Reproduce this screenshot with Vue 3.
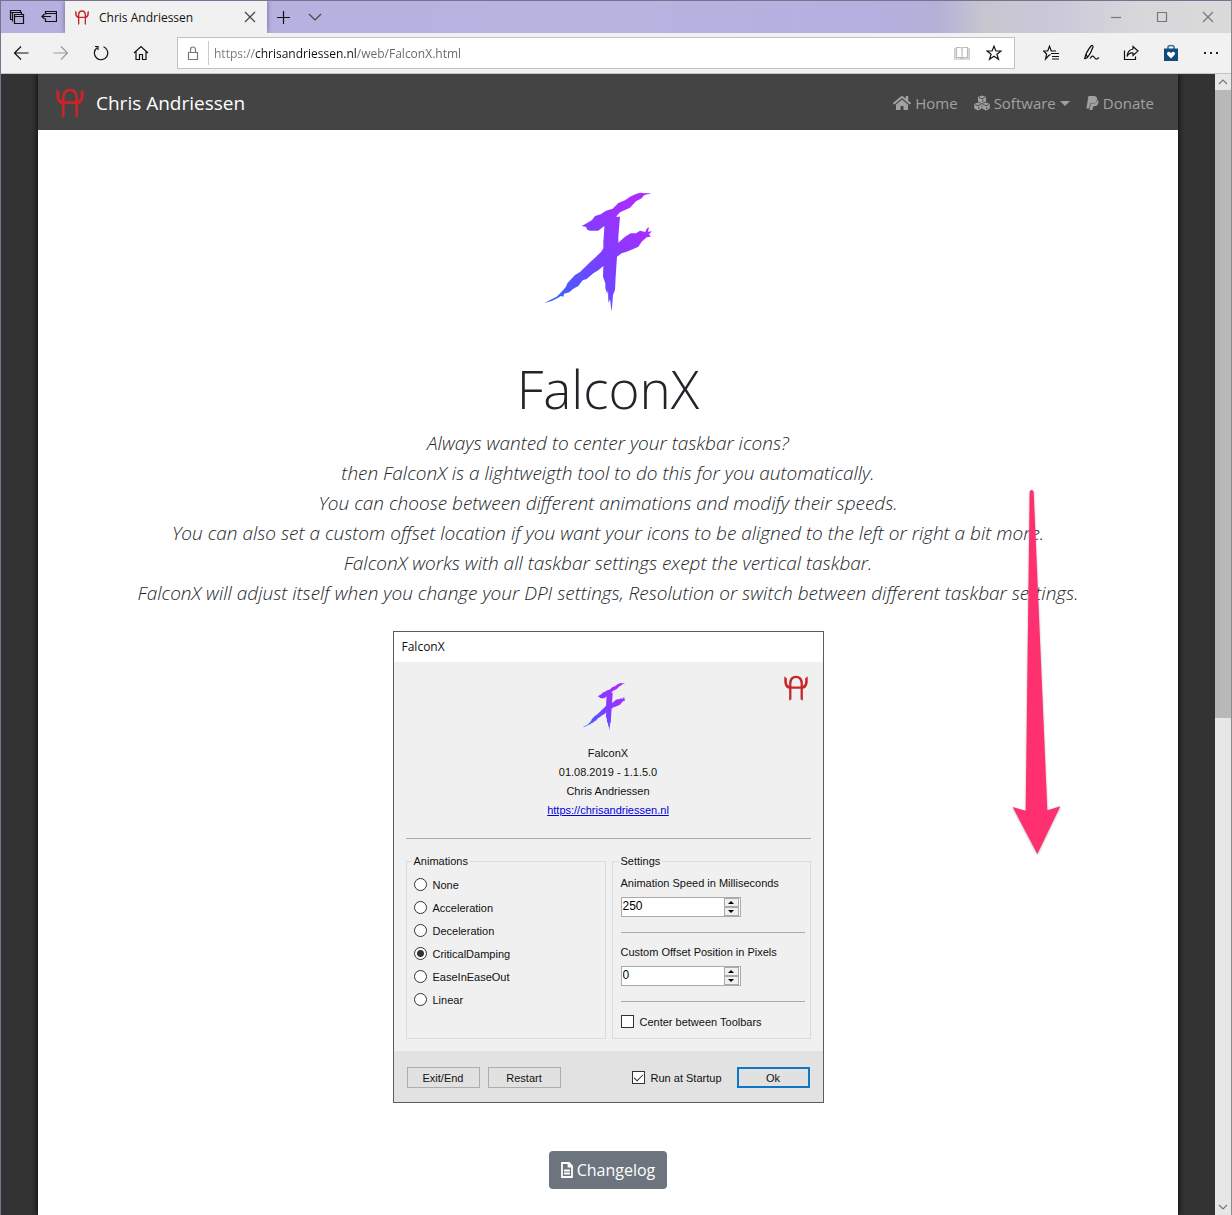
<script setup>
import { reactive, ref } from 'vue'

const brush =
  'M365 39L344 40L330 38L318 42L300 50L285 61L265 69L248 86L228 92L212 103L195 108L186 120L170 130L155 138L168 141L172 149L180 152L205 152L215 144L223 138L222 160L220 185L220 205L213 216L195 233L180 247L150 276L135 285L112 310L108 320L95 335L80 350L60 360L43 369L65 363L85 353L92 348L100 350L102 341L118 337L130 326L145 318L158 301L170 297L190 280L205 271L220 258L219 290L226 310L226 325L232 342L234 330L235 368L240 358L245 395L249 345L255 330L257 290L261 230L275 220L290 215L310 207L325 200L335 185L350 172L362 170L357 163L366 154L354 155L357 141L350 146L346 156L330 152L318 160L302 160L285 170L265 188L265 170L270 110L258 110L270 97L285 90L300 83L318 64L335 55L342 46Z'

const emblem =
  'M1 4L10 12V26Q12 38 25 40H59Q72 38 74 26V12L83 4V26Q80 46 66 48V90L58 84V48H26V84L18 90V48Q4 46 1 26ZM18 40V26Q20 2 42 2T66 26V40H58V28Q56 10 42 10T26 28V40Z'

const lead = [
  'Always wanted to center your taskbar icons?',
  'then FalconX is a lightweigth tool to do this for you automatically.',
  'You can choose between different animations and modify their speeds.',
  'You can also set a custom offset location if you want your icons to be aligned to the left or right a bit more.',
  'FalconX works with all taskbar settings exept the vertical taskbar.',
  'FalconX will adjust itself when you change your DPI settings, Resolution or switch between different taskbar settings.',
]

const animations = ['None', 'Acceleration', 'Deceleration', 'CriticalDamping', 'EaseInEaseOut', 'Linear']
const settings = reactive({
  animation: 'CriticalDamping',
  speed: '250',
  offset: '0',
  centered: false,
  startup: true,
})
const url = ref('https://chrisandriessen.nl/web/FalconX.html')

const step = (key, by) => {
  settings[key] = String(Number(settings[key]) + by)
}
</script>

<template>
  <div class="window">
    <header class="titlebar">
      <button class="tb" aria-label="Tabs set aside">
        <svg width="16" height="16" viewBox="0 0 16 16" class="line"><path d="M3.500 10.500h-2v-9h10v2M1.500 3.500h2M5.500 5.500h9v9h-9zM5.500 7.500h9M3.500 12.500v-9h9v2" /></svg>
      </button>
      <button class="tb" aria-label="Set tabs aside">
        <svg width="16" height="16" viewBox="0 0 16 16" class="line"><path d="M4.500 5.500v-3h11v10h-11v-3M4.500 4.500h11M1 7.500h9M3.500 5L1 7.500L3.500 10" /></svg>
      </button>
      <div class="tab">
        <svg class="ah" width="14" height="15" viewBox="0 0 84 90"><path :d="emblem" /></svg>
        <span class="tab-name">Chris Andriessen</span>
        <button class="tb" aria-label="Close tab">
          <svg width="12" height="12" viewBox="0 0 12 12" class="line soft"><path d="M1 1L11 11M11 1L1 11" /></svg>
        </button>
      </div>
      <button class="tb" aria-label="New tab">
        <svg width="14" height="14" viewBox="0 0 14 14" class="line"><path d="M7.500 1v13M1 7.500h13" /></svg>
      </button>
      <button class="tb" aria-label="Tab previews">
        <svg width="14" height="8" viewBox="0 0 14 8" class="line soft"><path d="M1 1L7 7L13 1" /></svg>
      </button>
      <div class="controls">
        <button class="tb" aria-label="Minimize"><svg width="12" height="12" viewBox="0 0 12 12" class="line grey"><path d="M1 6.500h10" /></svg></button>
        <button class="tb" aria-label="Maximize"><svg width="12" height="12" viewBox="0 0 12 12" class="line grey"><path d="M1.500 1.500h9v9h-9z" /></svg></button>
        <button class="tb" aria-label="Close"><svg width="12" height="12" viewBox="0 0 12 12" class="line grey"><path d="M1 1L11 11M11 1L1 11" /></svg></button>
      </div>
    </header>

    <div class="toolbar">
      <button class="tool" aria-label="Back"><svg width="16" height="16" viewBox="0 0 16 16" class="line"><path d="M8 1.500L1.500 8L8 14.500M1.500 8H15.500" /></svg></button>
      <button class="tool" aria-label="Forward"><svg width="16" height="16" viewBox="0 0 16 16" class="line pale"><path d="M8 1.500L14.500 8L8 14.500M14.500 8H.5" /></svg></button>
      <button class="tool" aria-label="Refresh"><svg width="16" height="16" viewBox="0 0 16 16" class="line"><path d="M10.500 1.800A6.700 6.700 0 1 1 4 2.700M2 1.500H5V5" /></svg></button>
      <button class="tool" aria-label="Home page"><svg width="16" height="16" viewBox="0 0 16 16" class="line"><path d="M1 8L8 1.500L15 8M3 6.500V14.500H6.500V9.500H9.500V14.500H13V6.500" /></svg></button>
      <div class="address">
        <svg width="12" height="14" viewBox="0 0 12 14" class="line grey"><path d="M1.500 6.500h9v7h-9zM3.500 6.500V4Q3.500 1 6 1T8.500 4V6.500" /></svg>
        <i class="bar"></i>
        <input v-model="url" class="url" type="text" aria-label="Address" />
        <button class="tb" aria-label="Reading view"><svg width="16" height="14" viewBox="0 0 16 14" class="line faint"><path d="M2.500 1.500H6.500Q8 1.500 8 3Q8 1.500 9.500 1.500H13.500V11.500H9.500L8 12.500L6.500 11.500H2.500zM8 3V12.500M2.500 3H.8V13H15.200V3H13.500" /></svg></button>
        <button class="tb" aria-label="Add to favorites"><svg width="16" height="16" viewBox="0 0 16 16" class="line"><path d="M8 1.200L9.900 6H15L10.900 9.200L12.500 14.300L8 11.200L3.500 14.300L5.100 9.200L1 6H6.100Z" /></svg></button>
      </div>
      <div class="tools">
        <button class="tool" aria-label="Favorites"><svg width="16" height="16" viewBox="1 0 16 16" class="line"><path d="M8.500 9.500L6.700 10.500L3.600 14L4.600 9L1.500 6H5.700L7.500 1.200L9.300 6H14M9 8.500H17M10 11.500H17M10 14H17" /></svg></button>
        <button class="tool" aria-label="Add notes"><svg width="18" height="18" viewBox="0 0 18 18" class="line"><path d="M2.500 15L4 10Q7 4 9.500 1.500Q11 1 11 3Q9 9 5.500 13.500L2.500 15M4 10L5.500 13.500M8 14.500Q10.500 10.500 12 13T15 15L17 13.500" /></svg></button>
        <button class="tool" aria-label="Share"><svg width="16" height="16" viewBox="0 0 16 16" class="line"><path d="M1.500 5.500V14.500H12.500V11.500M10 1.500L15 6L10 10.500V8Q6 7.500 4 11.500Q4.500 5 10 4Z" /></svg></button>
        <button class="tool" aria-label="Shopping"><svg width="16" height="18" viewBox="0 0 16 18"><path d="M5 5V3Q5 1.500 8 1.500T11 3V5" fill="none" stroke="#3e7298" stroke-width="1.500" /><path d="M1 4.500H15V17H1Z" fill="#0f4c78" /><path d="M8 14.500L4.300 10.800Q3.300 8.400 5.500 7.800Q7.200 7.500 8 9.300Q8.800 7.500 10.500 7.800Q12.700 8.400 11.700 10.800Z" fill="#fff" /></svg></button>
        <button class="tool" aria-label="More"><svg width="16" height="4" viewBox="0 0 16 4"><path d="M1 1h2v2H1zM7 1h2v2H7zM13 1h2v2h-2z" fill="#222" /></svg></button>
      </div>
    </div>

    <div class="view">
      <div class="backdrop">
        <div class="page">
          <nav class="navbar">
            <a class="brand" href="#">
              <svg class="ah" width="28" height="30" viewBox="0 0 84 90"><path :d="emblem" /></svg>
              Chris Andriessen
            </a>
            <a class="link" href="#">
              <svg width="18" height="16" viewBox="0 0 576 512" fill="currentColor"><path d="M280.370 148.260L96 300.110V464a16 16 0 0 0 16 16l112.060-.29a16 16 0 0 0 15.920-16V368a16 16 0 0 1 16-16h64a16 16 0 0 1 16 16v95.640a16 16 0 0 0 16 16.050L464 480a16 16 0 0 0 16-16V300L295.670 148.260a12.190 12.190 0 0 0-15.300 0zM571.600 251.470L488 182.560V44.050a12 12 0 0 0-12-12h-56a12 12 0 0 0-12 12v72.610L318.470 43a48 48 0 0 0-61 0L4.340 251.470a12 12 0 0 0-1.600 16.900l25.500 31A12 12 0 0 0 45.150 301l235.220-193.740a12.190 12.190 0 0 1 15.300 0L530.900 301a12 12 0 0 0 16.900-1.600l25.500-31a12 12 0 0 0-1.700-16.930z" /></svg>
              Home
            </a>
            <a class="link" href="#">
              <svg width="16" height="16" viewBox="0 0 32 32">
                <g fill="currentColor"><path d="M16 1L24 4V13L16 17L8 13V4Z" /><path d="M8 15L15.500 18V27L8 31L.5 27V18Z" /><path d="M24 15L31.500 18V27L24 31L16.500 27V18Z" /></g>
                <path d="M10 5L16 7.500L22 5M2.500 19L8 21.500L13.500 19M18.500 19L24 21.500L29.500 19M17.500 14V9.500M9.500 28V23.500M25.500 28V23.500" fill="none" stroke="#444" stroke-width="1.800" />
              </svg>
              Software<i class="caret"></i>
            </a>
            <a class="link" href="#">
              <svg width="13" height="16" viewBox="0 0 384 512" fill="currentColor"><path d="M111.400 295.900c-3.500 19.200-17.400 108.700-21.500 134-.3 1.800-1 2.500-3 2.500H12.300c-7.600 0-13.100-6.600-12.100-13.900L58.800 46.600c1.500-9.600 10.100-16.900 20-16.900 152.300 0 165.100-3.700 204 11.400 60.100 23.300 65.600 79.500 44 140.300-21.500 62.600-72.500 89.500-140.100 90.300-43.400.7-69.500-7-75.300 24.200zM357.100 152c-1.800-1.300-2.500-1.800-3 1.300-2 11.400-5.100 22.500-8.800 33.600-39.900 113.800-150.500 103.900-204.500 103.900-6.100 0-10.100 3.300-10.900 9.400-22.600 140.400-27.100 169.700-27.100 169.700-1 7.100 3.500 12.900 10.600 12.900h63.500c8.600 0 15.700-6.300 17.400-14.900.7-5.400-1.100 6.100 14.400-91.300 4.600-22 14.300-19.700 29.300-19.700 71 0 126.400-28.800 142.900-112.300 6.500-34.800 4.600-71.400-23.800-92.600z" /></svg>
              Donate
            </a>
          </nav>

          <main class="main">
            <svg width="156" height="140" viewBox="0 0 468 420">
              <defs>
                <linearGradient id="violet" gradientUnits="userSpaceOnUse" x1="60" y1="350" x2="350" y2="120">
                  <stop offset="0" stop-color="#3a62ff" />
                  <stop offset=".5" stop-color="#7a40ff" />
                  <stop offset="1" stop-color="#ac2cff" />
                </linearGradient>
              </defs>
              <path :d="brush" fill="url(#violet)" />
            </svg>
            <h1>FalconX</h1>
            <p class="lead">
              <template v-for="line in lead" :key="line">{{ line }}<br /></template>
            </p>

            <section class="dialog">
              <header class="dialog-title">FalconX</header>
              <div class="dialog-body">
                <div class="about">
                  <svg class="mini" width="64" height="56" viewBox="0 0 468 420"><path :d="brush" fill="url(#violet)" /></svg>
                  <svg class="ah corner" width="24" height="26" viewBox="0 0 84 90"><path :d="emblem" /></svg>
                  <span>FalconX</span>
                  <span>01.08.2019 - 1.1.5.0</span>
                  <span>Chris Andriessen</span>
                  <a href="#">https://chrisandriessen.nl</a>
                </div>
                <hr />
                <div class="groups">
                  <fieldset>
                    <legend>Animations</legend>
                    <label v-for="name in animations" :key="name" class="option">
                      <input v-model="settings.animation" type="radio" name="animation" :value="name" />{{ name }}
                    </label>
                  </fieldset>
                  <fieldset>
                    <legend>Settings</legend>
                    <label class="caption" for="speed">Animation Speed in Milliseconds</label>
                    <div class="spin">
                      <input id="speed" v-model="settings.speed" type="text" />
                      <span class="arrows">
                        <button aria-label="Increase speed" @click="step('speed', 1)"><svg width="6" height="3" viewBox="0 0 6 3"><path d="M0 3L3 0L6 3Z" /></svg></button>
                        <button aria-label="Decrease speed" @click="step('speed', -1)"><svg width="6" height="3" viewBox="0 0 6 3"><path d="M0 0L3 3L6 0Z" /></svg></button>
                      </span>
                    </div>
                    <hr />
                    <label class="caption" for="offset">Custom Offset Position in Pixels</label>
                    <div class="spin">
                      <input id="offset" v-model="settings.offset" type="text" />
                      <span class="arrows">
                        <button aria-label="Increase offset" @click="step('offset', 1)"><svg width="6" height="3" viewBox="0 0 6 3"><path d="M0 3L3 0L6 3Z" /></svg></button>
                        <button aria-label="Decrease offset" @click="step('offset', -1)"><svg width="6" height="3" viewBox="0 0 6 3"><path d="M0 0L3 3L6 0Z" /></svg></button>
                      </span>
                    </div>
                    <hr />
                    <label class="check"><input v-model="settings.centered" type="checkbox" />Center between Toolbars</label>
                  </fieldset>
                </div>
              </div>
              <footer class="dialog-foot">
                <button class="btn">Exit/End</button>
                <button class="btn">Restart</button>
                <label class="check run"><input v-model="settings.startup" type="checkbox" />Run at Startup</label>
                <button class="btn ok">Ok</button>
              </footer>
            </section>

            <button class="changelog">
              <svg width="12" height="16" viewBox="0 0 12 16" fill="none" stroke="#fff" stroke-width="1.800"><path d="M1 1H8L11 4V15H1ZM7.500 1V4.500H11M3 8.500H9M3 11.500H9" /></svg>
              Changelog
            </button>
          </main>

          <svg class="arrow" width="80" height="385" viewBox="0 0 240 1155">
            <path d="M89 36Q90 30 95 30T101 36L142 991L181 979L112 1122L38 981L77 992Z" fill="#ff306f" />
          </svg>
        </div>
      </div>
      <div class="scroll">
        <svg width="10" height="6" viewBox="0 0 10 6" class="line grey"><path d="M1 5L5 1L9 5" /></svg>
        <i class="thumb"></i>
        <i class="track"></i>
        <svg width="10" height="6" viewBox="0 0 10 6" class="line grey"><path d="M1 1L5 5L9 1" /></svg>
      </div>
    </div>
  </div>
</template>

<style>
body {
  margin: 0;
}
</style>

<style scoped>
* {
  box-sizing: border-box;
}
.window {
  display: flex;
  flex-direction: column;
  min-height: 100vh;
  border: 1px solid #77738f;
  border-right-color: #8a8a8e;
  border-bottom-color: #777;
  background: #f1f1f1;
  font-family: "Open Sans", "Noto Sans", sans-serif;
  color: #212529;
}
button {
  display: inline-flex;
  align-items: center;
  justify-content: center;
  padding: 0;
  border: 0;
  background: none;
  font: inherit;
  color: inherit;
}
svg {
  flex: none;
  display: block;
}
.line {
  fill: none;
  stroke: #111;
  stroke-width: 1.2;
}
.line.soft {
  stroke: #444;
}
.line.grey {
  stroke: #777;
}
.line.pale {
  stroke: #999;
}
.line.faint {
  stroke: #bbb;
}
.ah {
  fill: #c8252a;
}
.titlebar {
  display: flex;
  height: 32px;
  background: linear-gradient(90deg, #b5b0df 0, #b8b3df 50%, #b4b0e0 70%, #b3b0d8 76%, #c7c6cf 80%, #cbc9da 86%, #d7d7da 92%, #dadada 100%);
}
.tb {
  width: 32px;
  height: 32px;
}
.tab {
  display: flex;
  align-items: center;
  width: 202px;
  padding: 0 1px 0 10px;
  background: #f1f1f1;
  box-shadow: 0 0 5px rgba(40, 30, 80, 0.5);
  clip-path: inset(0 -6px 0 -6px);
}
.tab-name {
  flex: 1;
  padding-left: 10px;
  font-size: 12px;
  color: #111;
}
.controls {
  display: flex;
  margin-left: auto;
}
.controls .tb {
  width: 46px;
}
.toolbar {
  display: flex;
  align-items: center;
  height: 41px;
  border-bottom: 1px solid #c4c4c4;
}
.tool {
  width: 40px;
  height: 40px;
}
.address {
  display: flex;
  align-items: center;
  flex: 1;
  height: 32px;
  margin-left: 16px;
  padding: 0 4px 0 9px;
  border: 1px solid #c2c2c2;
  background: #fff;
}
.bar {
  width: 1px;
  height: 24px;
  margin-left: 9px;
  background: #ccc;
}
.url {
  flex: 1;
  min-width: 0;
  padding: 0 0 0 5px;
  border: 0;
  outline: 0;
  font: 12px "Open Sans", "Noto Sans", sans-serif;
  color: #555;
  background: linear-gradient(90deg, #777 46px, #111 46px, #111 148px, #666 148px);
  -webkit-background-clip: text;
  background-clip: text;
  -webkit-text-fill-color: transparent;
}
.tools {
  display: flex;
  margin-left: 16px;
}
.view {
  display: flex;
  flex: 1;
}
.backdrop {
  flex: 1;
  min-width: 0;
  overflow: hidden;
  background: #333;
}
.page {
  position: relative;
  max-width: 1140px;
  height: 100%;
  margin: 0 auto;
  background: #fff;
  box-shadow: 0 0 6px #000;
}
.navbar {
  display: flex;
  align-items: center;
  gap: 16px;
  height: 56px;
  padding: 2px 24px 0 18px;
  background: #444;
}
.brand {
  display: flex;
  align-items: center;
  gap: 12px;
  margin-right: auto;
  font-size: 19px;
  color: #fff;
  text-decoration: none;
}
.link {
  display: flex;
  align-items: center;
  gap: 4px;
  font-size: 15px;
  color: #a1a1a1;
  text-decoration: none;
}
.caret {
  border: 5px solid transparent;
  border-top-color: currentColor;
  border-bottom: 0;
}
.main {
  display: flex;
  flex-direction: column;
  align-items: center;
  padding: 50px 15px 26px;
}
h1 {
  margin: 35px 0 0;
  font-size: 53px;
  font-weight: 300;
  line-height: 67px;
}
.lead {
  margin: 6px 0 0;
  font-size: 19px;
  font-style: italic;
  font-weight: 300;
  line-height: 30px;
  text-align: center;
}
.dialog {
  width: 431px;
  margin-top: 23px;
  border: 1px solid #5c5c5c;
  background: #f0f0f0;
  font: 11px/16px "Liberation Sans", Arial, sans-serif;
  color: #111;
}
.dialog-title {
  padding: 0 8px;
  background: #fff;
  font: 12px/30px "Open Sans", "Noto Sans", sans-serif;
}
.dialog-body {
  padding: 16px 12px 12px;
}
.about {
  position: relative;
  display: flex;
  flex-direction: column;
  align-items: center;
  line-height: 19px;
}
.mini {
  margin-bottom: 10px;
}
.corner {
  position: absolute;
  top: -3px;
  right: 3px;
}
.about a {
  color: #0000e0;
}
hr {
  width: 100%;
  height: 1px;
  margin: 0;
  border: 0;
  background: #aaa;
}
.dialog-body > hr {
  margin-top: 18px;
}
.groups {
  display: grid;
  grid-template-columns: 200px 1fr;
  gap: 6px;
  margin-top: 14px;
}
fieldset {
  min-width: 0;
  height: 186px;
  margin: 0;
  padding: 4px 5px 0 8px;
  border: 1px solid #dcdcdc;
}
fieldset:first-child {
  padding-left: 7px;
}
legend {
  margin-left: -2px;
  padding: 0 2px;
}
.option,
.check {
  display: flex;
  align-items: center;
  height: 23px;
}
input[type="radio"],
input[type="checkbox"] {
  appearance: none;
  width: 13px;
  height: 13px;
  margin: 0 6px 0 0;
  border: 1px solid #333;
  background: #fff;
}
input[type="radio"] {
  border-radius: 50%;
}
input[type="radio"]:checked {
  background: radial-gradient(circle, #333 3px, #fff 4px);
}
.caption {
  display: block;
  margin-top: 2px;
}
.spin {
  display: flex;
  width: 120px;
  height: 20px;
  margin: 6px 0 15px;
  border: 1px solid #aaa;
  background: #fff;
}
.spin input {
  flex: 1;
  min-width: 0;
  padding: 0 0 2px 1px;
  border: 0;
  outline: 0;
  font: 12px "Liberation Sans", Arial, sans-serif;
  background: none;
}
.arrows {
  display: grid;
  width: 16px;
  padding-right: 1px;
  background: #fff;
}
.arrows button {
  border: 1px solid #aaa;
  background: #f0f0f0;
}
hr + .caption {
  margin-top: 11px;
}
hr + .check {
  margin-top: 8px;
}
.check input {
  display: grid;
  place-items: center;
}
.check input:checked::after {
  content: "";
  width: 8px;
  height: 4px;
  border: solid #333;
  border-width: 0 0 1px 1px;
  transform: translateY(-1px) rotate(-45deg);
}
.dialog-foot {
  display: flex;
  align-items: center;
  gap: 8px;
  height: 51px;
  padding: 2px 13px 0;
  background: #e2e2e2;
}
.btn {
  width: 73px;
  height: 21px;
  border: 1px solid #adadad;
  background: #e1e1e1;
}
.btn.ok {
  margin-left: 7px;
  border: 2px solid #0f77c8;
}
.run {
  margin-left: auto;
}
.changelog {
  gap: 4px;
  height: 38px;
  margin-top: 48px;
  padding: 0 12px;
  border-radius: 4px;
  background: #6c757d;
  font-size: 16px;
  color: #fff;
}
.arrow {
  position: absolute;
  top: 406px;
  right: 98px;
  filter: drop-shadow(0 1px 1px rgba(0, 0, 0, 0.3));
}
.scroll {
  display: flex;
  flex-direction: column;
  align-items: center;
  width: 16px;
  padding: 5px 0;
  background: #e7e7e7;
}
.thumb {
  flex: 627;
  width: 100%;
  margin-top: 5px;
  background: #b9b9b9;
}
.track {
  flex: 486;
}
</style>
